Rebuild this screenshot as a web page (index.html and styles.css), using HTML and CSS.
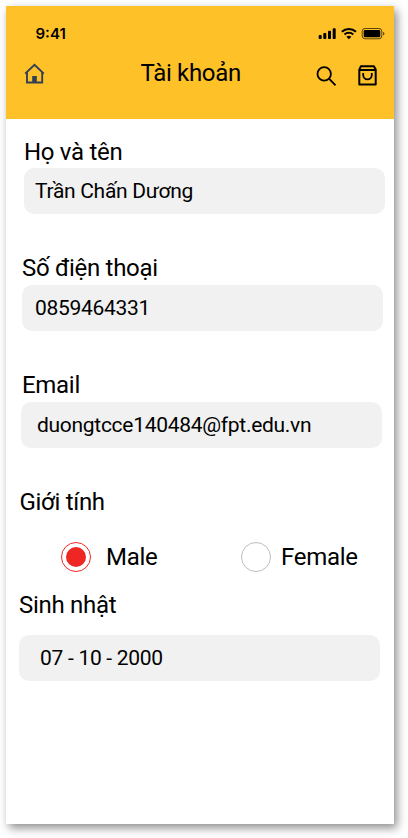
FILE: index.html
```html
<!DOCTYPE html>
<html lang="vi">
<head>
<meta charset="utf-8">
<title>Tài khoản</title>
<link rel="stylesheet" href="styles.css">
</head>
<body>
<div class="screen">
  <header class="header">
    <div class="status">
      <span class="time">9:41</span>
      <svg class="status-icons" width="67" height="13" viewBox="0 0 67 13">
        <rect x="0.7" y="8" width="3" height="4" rx="0.8"/>
        <rect x="5.3" y="6" width="3" height="6" rx="0.8"/>
        <rect x="10" y="3.7" width="3" height="8.3" rx="0.8"/>
        <rect x="14.7" y="1.3" width="3" height="10.7" rx="0.8"/>
        <g fill="none" stroke="#000" stroke-width="2">
          <path d="M23.8 4.8a10.4 10.4 0 0 1 14.2 0"/>
          <path d="M26.5 7.6a6.4 6.4 0 0 1 8.8 0"/>
        </g>
        <path d="M28.4 9.8a3.8 3.8 0 0 1 5 0l-2.5 2.4z"/>
        <rect x="44.2" y="1.5" width="19.6" height="10.3" rx="2.8" fill="none" stroke="#000" stroke-opacity=".65"/>
        <rect x="45.7" y="3" width="16.6" height="7.3" rx="1.4"/>
        <path d="M65 4.8c2 .8 2 3 0 3.8z" fill-opacity=".6"/>
      </svg>
    </div>
    <div class="nav">
      <svg class="home" width="21" height="21" viewBox="0 0 21 21" fill="none" stroke="#333f56" stroke-width="1.9">
        <path d="M1.2 10.6L10.5 1.7l9.3 8.9"/>
        <path d="M3 9.2v10.3h15.2V9.2"/>
        <path d="M8.2 19.5v-6.5h4.6v6.5z" fill="#333f56" stroke="none"/>
      </svg>
      <h1 class="title">Tài khoản</h1>
      <svg class="search" width="20" height="20" viewBox="0 0 20 20" fill="none" stroke="#000" stroke-width="1.8">
        <circle cx="8.2" cy="7.9" r="6.7"/>
        <path d="M13 12.7l6.5 6.6"/>
      </svg>
      <svg class="bag" width="20" height="22" viewBox="0 0 20 22" fill="none" stroke="#000" stroke-width="2" stroke-linejoin="round">
        <path d="M1.3 4.6L2.9 1.3h13l1.8 3.3v15H1.3zM1.3 5h16.4"/>
        <path d="M5.2 8v2a4.3 4.3 0 0 0 8.6 0v-2" stroke-width="1.8"/>
      </svg>
    </div>
  </header>
  <main class="form">
    <section class="group name">
      <div class="label">Họ và tên</div>
      <div class="field">Trần Chấn Dương</div>
    </section>
    <section class="group phone">
      <div class="label">Số điện thoại</div>
      <div class="field">0859464331</div>
    </section>
    <section class="group email">
      <div class="label">Email</div>
      <div class="field">duongtcce140484@fpt.edu.vn</div>
    </section>
    <section class="gender">
      <div class="label">Giới tính</div>
      <div class="options">
        <span class="radio checked"></span>
        <span class="label male">Male</span>
        <span class="radio"></span>
        <span class="label female">Female</span>
      </div>
    </section>
    <section class="group birthday">
      <div class="label">Sinh nhật</div>
      <div class="field">07 - 10 - 2000</div>
    </section>
  </main>
</div>
</body>
</html>
```
FILE: styles.css
```css
* { box-sizing: border-box; }
body {
  margin: 0;
  padding: 6px;
  height: 838px;
  overflow: hidden;
  background: #fff;
  color: #000;
  font-family: Roboto, sans-serif;
}
svg { display: block; flex: none; }
.screen {
  width: 388px;
  height: 818px;
  background: #fff;
  box-shadow: 3px 4px 9px rgba(0, 0, 0, .45);
}
.header { height: 113px; background: #ffc128; }
.status {
  display: flex;
  justify-content: space-between;
  padding: 18px 9px 0 29.5px;
  height: 48px;
}
.time {
  font: 600 15px/20px Inter, sans-serif;
}
.status-icons { margin-top: 3px; }
.nav { display: flex; padding-left: 18px; }
.home { margin-top: 9px; }
.title {
  margin: 5px 0 0 95.6px;
  width: 100.4px;
  font-size: 24px;
  font-weight: 400;
  line-height: 28px;
  letter-spacing: -0.33px;
  white-space: nowrap;
}
.search { margin: 12px 0 0 75px; }
.bag { margin: 11px 0 0 22px; }
.form { padding-top: 19px; }
.label {
  font-size: 24px;
  line-height: 28px;
  letter-spacing: -0.3px;
  white-space: nowrap;
}
.group { width: 361px; }
.field {
  height: 46px;
  margin-top: 3px;
  padding-left: 13px;
  border-radius: 10px;
  background: #f1f1f1;
  font-size: 21px;
  line-height: 46px;
  letter-spacing: -0.29px;
  white-space: nowrap;
}
.name { margin-left: 18px; }
.name .field { margin-top: 2px; padding-left: 11px; }
.phone { margin: 40px 0 0 16px; }
.email { margin: 40px 0 0 15px; }
.email .label { padding-left: 1px; }
.email .field { padding-left: 16px; }
.gender { margin: 40px 0 0 13.5px; }
.options {
  display: flex;
  align-items: center;
  height: 30px;
  margin-top: 26px;
  padding-left: 41px;
}
.radio {
  width: 30px;
  height: 30px;
  border: 1px solid #bdbdbd;
  border-radius: 50%;
  flex: none;
}
.checked {
  padding: 4px;
  border-color: #ee2624;
  background: #ee2624 content-box;
}
.male { width: 150px; padding-left: 15.6px; }
.female { margin-left: 10.5px; }
.birthday { margin: 19px 0 0 13px; }
.birthday .field { margin-top: 16px; padding-left: 21px; }
```
